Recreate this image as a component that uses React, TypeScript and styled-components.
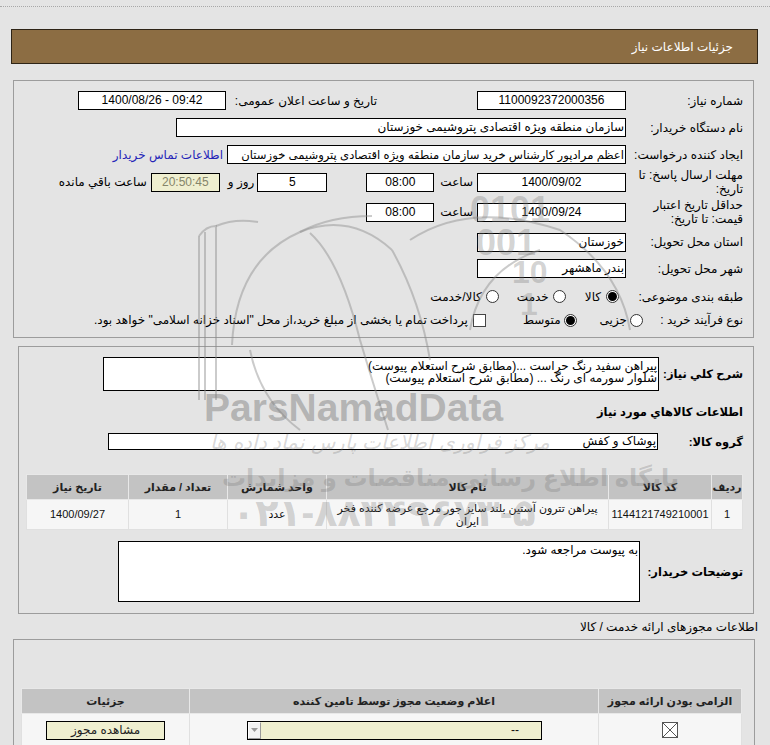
import React from 'react';
import styled, { createGlobalStyle } from 'styled-components';

const GlobalStyle = createGlobalStyle`
  html, body { margin: 0; padding: 0; }
  body {
    background: #e4e4e4;
    font-family: "Liberation Sans", "DejaVu Sans", sans-serif;
    font-size: 11px;
    color: #111;
  }
`;

const Page = styled.div`
  position: relative;
  width: 770px;
  height: 745px;
  overflow: hidden;
  background: #e4e4e4;
`;

const TopRule = styled.div`
  height: 6px;
  border-bottom: 1px dotted #a8a8a8;
`;

const TitleBar = styled.div`
  margin: 22px 0 0 11px;
  width: 747px;
  height: 35px;
  box-sizing: border-box;
  background: #8c6d43;
  border: 1px solid #2e2416;
  direction: rtl;
  display: flex;
  align-items: center;
  padding-right: 24px;
  color: #fff;
  font-size: 12px;
`;

const Panel = styled.div<{ $left: number; $width: number; $top: number; $pad: string; $height?: number }>`
  margin: ${(p) => p.$top}px 0 0 ${(p) => p.$left}px;
  width: ${(p) => p.$width}px;
  ${(p) => (p.$height ? `height: ${p.$height}px;` : '')}
  box-sizing: border-box;
  border: 1px solid #9c9c9c;
  direction: rtl;
  padding: ${(p) => p.$pad};
`;

const FormRow = styled.div<{ $h: number; $label?: number; $mt?: number }>`
  display: grid;
  grid-template-columns: ${(p) => p.$label ?? 117}px 1fr;
  align-items: center;
  height: ${(p) => p.$h}px;
  margin-top: ${(p) => p.$mt ?? 0}px;
`;

const Label = styled.div<{ $bold?: boolean }>`
  white-space: nowrap;
  text-align: right;
  font-size: ${(p) => (p.$bold ? 11.5 : 12)}px;
  font-weight: ${(p) => (p.$bold ? 'bold' : 'normal')};
  line-height: 14px;
  color: #000;
`;

const Heading = styled.div<{ $h: number }>`
  height: ${(p) => p.$h}px;
  display: flex;
  align-items: center;
  font-size: 11.5px;
  font-weight: bold;
  color: #000;
`;

const Line = styled.div<{ $pr?: number }>`
  display: flex;
  align-items: center;
  padding-right: ${(p) => p.$pr ?? 0}px;
  min-width: 0;
`;

const Field = styled.div<{ $w: number; $h?: number; $align?: 'center' | 'right'; $khaki?: boolean; $before?: number; $size?: number }>`
  flex: none;
  width: ${(p) => p.$w}px;
  height: ${(p) => p.$h ?? 19}px;
  box-sizing: border-box;
  border: 1px solid #000;
  background: ${(p) => (p.$khaki ? '#efefd0' : '#fff')};
  color: ${(p) => (p.$khaki ? '#85856a' : '#000')};
  text-align: ${(p) => p.$align ?? 'center'};
  line-height: ${(p) => (p.$h ?? 19) - 2}px;
  padding: 0 1px;
  margin-inline-start: ${(p) => p.$before ?? 0}px;
  white-space: nowrap;
  overflow: hidden;
  font-size: ${(p) => p.$size ?? 12}px;
`;

const MultiBox = styled.div<{ $w: number; $h: number }>`
  flex: none;
  width: ${(p) => p.$w}px;
  height: ${(p) => p.$h}px;
  box-sizing: border-box;
  border: 1px solid #000;
  background: #fff;
  padding: 2px 1px;
  font-size: 12px;
  line-height: 12px;
  color: #000;
  text-align: right;
`;

const Text = styled.span<{ $before?: number; $link?: boolean; $w?: number }>`
  flex: none;
  white-space: nowrap;
  font-size: 12px;
  text-align: right;
  ${(p) => (p.$w ? `width: ${p.$w}px;` : '')}
  margin-inline-start: ${(p) => p.$before ?? 0}px;
  color: ${(p) => (p.$link ? '#2424b8' : '#000')};
`;

const Radio = styled.span<{ $on?: boolean; $before?: number }>`
  flex: none;
  width: 13px;
  height: 13px;
  box-sizing: border-box;
  border-radius: 50%;
  border: 1px solid #333;
  background: #fff;
  display: inline-flex;
  align-items: center;
  justify-content: center;
  margin-inline-start: ${(p) => p.$before ?? 0}px;
  &::after {
    content: '';
    width: 9px;
    height: 9px;
    border-radius: 50%;
    background: ${(p) => (p.$on ? '#000' : 'transparent')};
  }
`;

const Check = styled.span<{ $before?: number }>`
  flex: none;
  width: 13px;
  height: 13px;
  box-sizing: border-box;
  border: 1px solid #444;
  background: #fff;
  margin-inline-start: ${(p) => p.$before ?? 0}px;
`;

const Grid = styled.table<{ $w: number; $mt?: number }>`
  width: ${(p) => p.$w}px;
  margin-top: ${(p) => p.$mt ?? 0}px;
  border-collapse: collapse;
  table-layout: fixed;
  border: 1px solid #d2d2d2;
`;

const Th = styled.th<{ $w: number }>`
  width: ${(p) => p.$w}px;
  height: 24px;
  background: #c3c3c3;
  border: 1px solid #e8e8e8;
  font-size: 11px;
  font-weight: bold;
  color: #222;
  padding: 0;
  text-align: center;
`;

const Td = styled.td<{ $h?: number }>`
  height: ${(p) => p.$h ?? 29}px;
  background: #f6f6f6;
  border: 1px solid #e0e0e0;
  font-size: 11px;
  line-height: 13px;
  text-align: center;
  vertical-align: middle;
  padding: 0 2px;
  color: #111;
`;

const Caption = styled.div`
  height: 25px;
  direction: rtl;
  padding-right: 12px;
  display: flex;
  align-items: center;
  font-size: 12px;
  color: #000;
`;

const Button = styled.div`
  margin: 0 auto;
  width: 119px;
  height: 19px;
  box-sizing: border-box;
  border: 1px solid #000;
  background: #efefd0;
  line-height: 17px;
  text-align: center;
  font-size: 12px;
  color: #222;
`;

const SelectBox = styled.div`
  margin-right: 54px;
  width: 295px;
  height: 19px;
  box-sizing: border-box;
  border: 1px solid #000;
  background: #efefd0;
  display: flex;
  align-items: center;
  justify-content: space-between;
  direction: rtl;
  padding-right: 22px;
  font-size: 12px;
`;

const SelectArrow = styled.span`
  width: 13px;
  height: 17px;
  box-sizing: border-box;
  border: 1px solid #9a9a9a;
  border-left-color: #fff;
  border-top-color: #fff;
  background: #f2f2f2;
  display: flex;
  align-items: center;
  justify-content: center;
`;

const Watermark = styled.div`
  position: absolute;
  inset: 0;
  pointer-events: none;
  z-index: 5;
`;

const WmText = styled.div<{ $x: number; $y: number; $size: number; $bold?: boolean; $op?: number; $italic?: boolean }>`
  position: absolute;
  left: ${(p) => p.$x}px;
  top: ${(p) => p.$y}px;
  font-family: "Liberation Sans", "DejaVu Sans", sans-serif;
  font-size: ${(p) => p.$size}px;
  font-weight: ${(p) => (p.$bold ? 'bold' : 'normal')};
  font-style: ${(p) => (p.$italic ? 'italic' : 'normal')};
  color: rgba(120, 120, 120, ${(p) => p.$op ?? 0.4});
  white-space: nowrap;
  line-height: 1;
`;

const WmSvg = styled.svg`
  position: absolute;
  left: 0;
  top: 0;
`;

const XBox = () => (
  <svg width="16" height="16" viewBox="0 0 16 16" style={{ display: 'block', margin: '0 auto' }}>
    <rect x="0.5" y="0.5" width="15" height="15" fill="#fff" stroke="#555" />
    <path d="M1 1 L15 15 M15 1 L1 15" stroke="#555" strokeWidth="1" />
  </svg>
);

export default function App() {
  return (
    <Page>
      <GlobalStyle />
      <TopRule />
      <TitleBar>جزئیات اطلاعات نیاز</TitleBar>

      <Panel $left={13} $width={741} $top={16} $pad="6px 10px 9px 10px">
        <FormRow $h={27}>
          <Label>شماره نیاز:</Label>
          <Line>
            <Field $w={149}>1100092372000356</Field>
            <Text $before={100} $w={151}>تاریخ و ساعت اعلان عمومی:</Text>
            <Field $w={148} $before={5} dir="ltr">1400/08/26 - 09:42</Field>
          </Line>
        </FormRow>
        <FormRow $h={27}>
          <Label>نام دستگاه خریدار:</Label>
          <Line>
            <Field $w={450} $align="right">سازمان منطقه ویژه اقتصادی پتروشیمی خوزستان</Field>
          </Line>
        </FormRow>
        <FormRow $h={27}>
          <Label>ایجاد کننده درخواست:</Label>
          <Line>
            <Field $w={399} $align="right" $size={11.6}>اعظم مرادپور  کارشناس خرید سازمان منطقه ویژه اقتصادی پتروشیمی خوزستان</Field>
            <Text $before={4} $link>اطلاعات تماس خریدار</Text>
          </Line>
        </FormRow>
        <FormRow $h={28}>
          <Label>
            مهلت ارسال پاسخ: تا
            <br />
            تاریخ:
          </Label>
          <Line>
            <Field $w={149}>1400/09/02</Field>
            <Text $before={4}>ساعت</Text>
            <Field $w={68} $before={6}>08:00</Field>
            <Field $w={70} $before={39}>5</Field>
            <Text $before={3}>روز و</Text>
            <Field $w={69} $before={8} $khaki>20:50:45</Field>
            <Text $before={4}>ساعت باقي مانده</Text>
          </Line>
        </FormRow>
        <FormRow $h={32}>
          <Label>
            حداقل تاریخ اعتبار
            <br />
            قیمت: تا تاریخ:
          </Label>
          <Line>
            <Field $w={149}>1400/09/24</Field>
            <Text $before={4}>ساعت</Text>
            <Field $w={68} $before={6}>08:00</Field>
          </Line>
        </FormRow>
        <FormRow $h={28}>
          <Label>استان محل تحویل:</Label>
          <Line>
            <Field $w={149} $align="right">خوزستان</Field>
          </Line>
        </FormRow>
        <FormRow $h={25}>
          <Label>شهر محل تحویل:</Label>
          <Line>
            <Field $w={149} $align="right">بندر ماهشهر</Field>
          </Line>
        </FormRow>
        <FormRow $h={31}>
          <Label>طبقه بندی موضوعی:</Label>
          <Line $pr={7}>
            <Radio $on />
            <Text $before={5}>کالا</Text>
            <Radio $before={19} />
            <Text $before={4}>خدمت</Text>
            <Radio $before={18} />
            <Text $before={4}>کالا/خدمت</Text>
          </Line>
        </FormRow>
        <FormRow $h={16} $label={100}>
          <Label>نوع فرآیند خرید :</Label>
          <Line>
            <Radio />
            <Text $before={3}>جزیی</Text>
            <Radio $on $before={23} />
            <Text $before={3}>متوسط</Text>
            <Check $before={37} />
            <Text $before={5}>پرداخت تمام یا بخشی از مبلغ خرید،از محل "اسناد خزانه اسلامی" خواهد بود.</Text>
          </Line>
        </FormRow>
      </Panel>

      <Panel $left={18} $width={736} $top={8} $pad="10px 10px 11px 10px">
        <FormRow $h={34} $label={84}>
          <Label $bold>شرح کلي نیاز:</Label>
          <Line>
            <MultiBox $w={556} $h={34}>
              پیراهن سفید رنگ حراست ...(مطابق شرح استعلام پیوست)
              <br />
              شلوار سورمه ای رنگ ... (مطابق شرح استعلام پیوست)
            </MultiBox>
          </Line>
        </FormRow>
        <Heading $h={42}>اطلاعات کالاهاي مورد نیاز</Heading>
        <FormRow $h={17} $label={85}>
          <Label $bold>گروه کالا:</Label>
          <Line>
            <Field $w={550} $h={17} $align="right">پوشاک و کفش</Field>
          </Line>
        </FormRow>
        <Grid $w={710} $mt={24}>
          <thead>
            <tr>
              <Th $w={30}>ردیف</Th>
              <Th $w={102}>کد کالا</Th>
              <Th $w={281}>نام کالا</Th>
              <Th $w={98}>واحد شمارش</Th>
              <Th $w={98}>تعداد / مقدار</Th>
              <Th $w={101}>تاریخ نیاز</Th>
            </tr>
          </thead>
          <tbody>
            <tr>
              <Td>1</Td>
              <Td>1144121749210001</Td>
              <Td>پیراهن تترون آستین بلند سایز جور مرجع عرضه کننده فخر ایران</Td>
              <Td>عدد</Td>
              <Td>1</Td>
              <Td>1400/09/27</Td>
            </tr>
          </tbody>
        </Grid>
        <FormRow $h={61} $label={103} $mt={11}>
          <Label $bold>توضیحات خریدار:</Label>
          <Line>
            <MultiBox $w={522} $h={61}>به پیوست مراجعه شود.</MultiBox>
          </Line>
        </FormRow>
      </Panel>

      <Caption>اطلاعات مجوزهای ارائه خدمت / کالا</Caption>

      <Panel $left={13} $width={742} $top={0} $pad="48px 12px 0 11px" $height={120}>
        <Grid $w={717}>
          <thead>
            <tr>
              <Th $w={142}>الزامی بودن ارائه مجوز</Th>
              <Th $w={408}>اعلام وضعیت مجوز توسط تامین کننده</Th>
              <Th $w={167}>جزئیات</Th>
            </tr>
          </thead>
          <tbody>
            <tr>
              <Td $h={32}>
                <XBox />
              </Td>
              <Td $h={32}>
                <SelectBox>
                  <span>--</span>
                  <SelectArrow>
                    <svg width="7" height="4" viewBox="0 0 7 4">
                      <path d="M0 0 L7 0 L3.5 4 Z" fill="#999" />
                    </svg>
                  </SelectArrow>
                </SelectBox>
              </Td>
              <Td $h={32}>
                <Button>مشاهده مجوز</Button>
              </Td>
            </tr>
          </tbody>
        </Grid>
      </Panel>

      <Watermark>
        <WmSvg width="770" height="745" viewBox="0 0 770 745">
          <g fill="none" stroke="rgba(140,140,140,0.45)" strokeWidth="2">
            <path d="M199 236 Q206 226 216 226 L216 400" />
            <path d="M205 232 L205 400" />
            <path d="M199 236 L199 400" />
            <path d="M216 226 Q235 218 258 222" />
            <path d="M232 345 Q236 260 300 232 Q350 212 392 250" />
            <path d="M300 232 Q330 216 372 216" />
            <path d="M300 430 Q260 400 250 350" />
            <path d="M310 233 Q340 260 360 340 Q372 380 388 430" />
            <path d="M392 250 Q420 300 430 360" />
            <path d="M410 240 Q470 200 560 230 Q620 270 630 330" />
            <path d="M470 330 Q480 270 540 250" />
          </g>
        </WmSvg>
        <WmText $x={470} $y={192} $size={36} $bold $op={0.32}>0101</WmText>
        <WmText $x={476} $y={225} $size={36} $bold $op={0.32}>001</WmText>
        <WmText $x={512} $y={256} $size={32} $bold $op={0.32}>10</WmText>
        <WmText $x={520} $y={288} $size={32} $bold $op={0.28}>1</WmText>
        <WmText $x={204} $y={388} $size={39} $bold $op={0.45}>ParsNamadData</WmText>
        <WmText $x={210} $y={432} $size={20} $italic $op={0.3}>مرکز فراوری اطلاعات پارس نماد داده ها</WmText>
        <WmText $x={222} $y={466} $size={24} $bold $op={0.3}>پایگاه اطلاع رسانی مناقصات و مزایدات</WmText>
        <WmText $x={232} $y={494} $size={38} $bold $op={0.3}>۰۲۱-۸۸۳۴۹۶۷۳-۵</WmText>
      </Watermark>
    </Page>
  );
}
